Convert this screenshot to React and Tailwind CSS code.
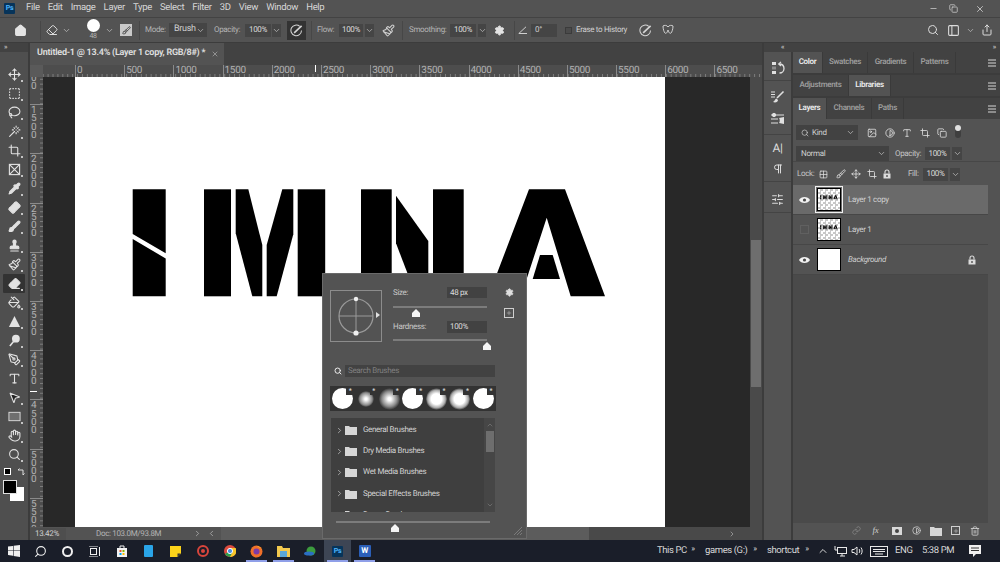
import {
  Move, SquareDashed, Lasso, Wand, Crop, Pipette, Bandage, Brush, Stamp, Eraser, PaintBucket,
  Search, PenTool, Type, MousePointer2, Hand, House, ChevronDown, ChevronRight, ChevronLeft, ChevronUp,
  Settings, Link, Trash2, Minus, X, Copy, Share, SlidersHorizontal, Pilcrow, PanelLeft,
  Image, Contrast, Grid2x2, Paintbrush, Plus
} from "lucide-react"

const menus = ["File", "Edit", "Image", "Layer", "Type", "Select", "Filter", "3D", "View", "Window", "Help"]

const tools = [
  [Move], [SquareDashed], [Lasso], [Wand], [Crop], [FrameTool],
  [Pipette, "currentColor"], [Bandage, "currentColor", "-rotate-45"], [Brush, "currentColor"], [Stamp, "currentColor"], [Paintbrush], [Eraser, "currentColor"],
  [PaintBucket], [GradientTool], [DodgeTool], [PenTool], [Type],
  [MousePointer2, "#222222"], [ShapeTool], [Hand], [Search]
]

const rulerLabels = [0, 500, 1000, 1500, 2000, 2500, 3000, 3500, 4000, 4500, 5000, 5500, 6000, 6500]
const sideLabels = ["1000", "1500", "2000", "2500", "3000", "3500", "4000", "4500", "5000", "5500"]
const brushSets = ["General Brushes", "Dry Media Brushes", "Wet Media Brushes", "Special Effects Brushes", "Bonus Brushes"]

function FrameTool({ size }) {
  return (
    <svg width={size} height={size} viewBox="0 0 14 14" fill="none" stroke="currentColor" strokeWidth="1.2">
      <rect x="1.5" y="1.5" width="11" height="11" />
      <path d="M1.5 1.5l11 11M12.5 1.5l-11 11" />
    </svg>
  )
}

function GradientTool({ size }) {
  return (
    <svg width={size} height={size} viewBox="0 0 14 14">
      <path d="M7 1l6 12H1z" fill="#e4e4e4" />
    </svg>
  )
}

function DodgeTool({ size }) {
  return (
    <svg width={size} height={size} viewBox="0 0 14 14">
      <circle cx="8.5" cy="5" r="4.2" fill="#e4e4e4" />
      <path d="M6 8l-4 5" stroke="#e4e4e4" strokeWidth="1.6" />
    </svg>
  )
}

function ShapeTool({ size }) {
  return (
    <svg width={size} height={size} viewBox="0 0 14 14">
      <rect x="1" y="2.5" width="12" height="9" fill="#6f6f6f" stroke="#dcdcdc" />
    </svg>
  )
}

function FolderIcon() {
  return (
    <svg width="12" height="10" viewBox="0 0 12 10" className="shrink-0">
      <path d="M0 1h4l1 1h7v8H0z" fill="#d6d6d6" />
    </svg>
  )
}

function EyeIcon() {
  return (
    <svg width="11" height="8" viewBox="0 0 11 8">
      <path d="M0 4c2-4 9-4 11 0-2 4-9 4-11 0z" fill="#f2f2f2" />
      <circle cx="5.5" cy="4" r="1.6" fill="#4a4a4a" />
    </svg>
  )
}

function LockIcon({ className = "" }) {
  return (
    <svg width="8" height="10" viewBox="0 0 8 10" className={className}>
      <path d="M2 4.5V3a2 2 0 0 1 4 0v1.5" fill="none" stroke="#dcdcdc" strokeWidth="1.1" />
      <rect x=".5" y="4.5" width="7" height="5" fill="#dcdcdc" />
      <rect x="3.3" y="6" width="1.4" height="2" fill="#535353" />
    </svg>
  )
}

function Art() {
  return (
    <>
      <path d="M132.7 189.3h33v64l-33-19.3zM132.7 239l33 19.5v37.8h-33z" fill="#000" />
      <rect x="204" y="189.3" width="27" height="107" fill="#000" />
      <path d="M235.7 189.3h12.6l14 55.7v51.3h-10l-16.6-63z" fill="#000" />
      <path d="M282.3 189.3h11v45l-16.6 62h-10V245z" fill="#000" />
      <rect x="297.7" y="189.3" width="27.5" height="107" fill="#000" />
      <rect x="361" y="189.3" width="30.7" height="107" fill="#000" />
      <path d="M396 195.7l32.3 45.3v55.3h-12L396 243.3z" fill="#000" />
      <rect x="433" y="189.3" width="30.7" height="107" fill="#000" />
      <path d="M529 189.3h36l40 107h-34.3l-24-78.6-25.7 78.6h-32.7z" fill="#000" />
      <path d="M540 255h12.7l7.3 24h-27.3z" fill="#000" />
    </>
  )
}

function Chevron({ className = "" }) {
  return <ChevronDown size={9} className={"text-[#bdbdbd] shrink-0 " + className} />
}

function ValueBox({ value, boxClass, chevClass, gap = "gap-[1px]" }) {
  return (
    <div className={"flex items-center " + gap}>
      <div className={"h-[13px] bg-[#454545] text-[#dcdcdc] text-[8px] flex items-center justify-center " + boxClass}>{value}</div>
      <div className={"h-[13px] bg-[#454545] flex items-center justify-center " + chevClass}><Chevron /></div>
    </div>
  )
}

function Sep({ className = "" }) {
  return <div className={"w-px h-[19px] bg-[#474747] " + className} />
}

function MenuBar() {
  return (
    <div className="h-[18px] flex items-center bg-[#535353] border-b border-[#434343] shrink-0">
      <div className="ml-[4px] w-[11px] h-[11px] rounded-[1px] bg-[#07345a] text-[#4cb4ff] text-[7px] font-bold leading-[11px] text-center">Ps</div>
      <div className="ml-[11px] flex gap-[8.15px] text-[9.5px] text-[#d6d6d6]">
        {menus.map((m) => <span key={m}>{m}</span>)}
      </div>
      <div className="ml-auto flex items-center text-[#cfcfcf]">
        <div className="w-[20px] flex justify-center"><Minus size={9} /></div>
        <div className="w-[20px] flex justify-center"><Copy size={9} /></div>
        <div className="w-[34px] mr-[3px] flex justify-center"><X size={10} /></div>
      </div>
    </div>
  )
}

function OptionsBar() {
  return (
    <div className="h-[25px] flex items-center bg-[#535353] border-b border-[#3c3c3c] shrink-0 text-[8px] text-[#b4b4b4]">
      <House size={13} fill="#e4e4e4" className="ml-[14px] text-[#e4e4e4]" />
      <Sep className="ml-[13px]" />
      <Eraser size={12} className="ml-[5px] text-[#dedede]" />
      <Chevron className="ml-[4px]" />
      <div className="ml-[15px] flex flex-col items-center w-[14px] -mt-[1px]">
        <div className="w-[13px] h-[13px] rounded-full bg-white" />
        <span className="text-[7px] leading-[8px] text-[#b5b5b5]">48</span>
      </div>
      <Chevron className="ml-[5px]" />
      <div className="ml-[6px] w-[12px] h-[12px] bg-[#c9c9c9] flex items-center justify-center">
        <Brush size={9} className="text-[#333]" />
      </div>
      <Sep className="ml-[7px]" />
      <span className="ml-[5px] w-[23px]">Mode:</span>
      <div className="ml-[1px] w-[38px] h-[14px] bg-[#454545] flex items-center justify-between px-[5px] text-[#cfcfcf] text-[9px]">Brush<Chevron /></div>
      <span className="ml-[7px] w-[31px]">Opacity:</span>
      <ValueBox value="100%" boxClass="w-[26px]" chevClass="w-[9px]" />
      <div className="ml-[6px] w-[19px] h-[19px] bg-[#333] flex items-center justify-center">
        <PressureIcon />
      </div>
      <Sep className="ml-[5px]" />
      <span className="ml-[5px] w-[22px]">Flow:</span>
      <ValueBox value="100%" boxClass="w-[24px]" chevClass="w-[9px]" gap="gap-[2px]" />
      <Paintbrush size={13} className="ml-[8px] text-[#d0d0d0]" />
      <Sep className="ml-[7px]" />
      <span className="ml-[6px] w-[41px]">Smoothing:</span>
      <ValueBox value="100%" boxClass="w-[26px]" chevClass="w-[8px]" gap="gap-[2px]" />
      <Settings size={11} fill="#e4e4e4" className="ml-[8px] text-[#e4e4e4]" />
      <Sep className="ml-[9px]" />
      <svg width="10" height="8" viewBox="0 0 10 8" fill="none" stroke="#cfcfcf" className="ml-[3px]"><path d="M9 7.5H.8L8 .8" /></svg>
      <div className="ml-[3px] w-[26px] h-[13px] bg-[#454545] flex items-center pl-[4px] text-[#cfcfcf]">0°</div>
      <div className="ml-[8px] w-[7px] h-[7px] border border-[#3b3b3b] bg-[#4b4b4b]" />
      <span className="ml-[4px] w-[51px] text-[#d0d0d0] whitespace-nowrap">Erase to History</span>
      <div className="ml-[12px]"><PressureIcon /></div>
      <svg width="12" height="12" viewBox="0 0 12 12" fill="none" stroke="#d0d0d0" className="ml-[10px]"><path d="M6 3C5 1 2 1 1 2c0 3 1 6 2 7s2 0 3-3c1 3 2 4 3 3s2-4 2-7c-1-1-4-1-5 1z" /></svg>
      <div className="ml-auto flex items-center text-[#dcdcdc]">
        <Search size={12} />
        <PanelLeft size={13} className="ml-[8px]" />
        <Chevron className="ml-[6px]" />
        <Share size={12} className="ml-[6px] mr-[7px]" />
      </div>
    </div>
  )
}

function PressureIcon() {
  return (
    <svg width="13" height="13" viewBox="0 0 14 14" fill="none" stroke="#d6d6d6" strokeWidth="1.1">
      <path d="M10.5 2.6A5.7 5.7 0 1 0 12.4 7" />
      <path d="M4.5 9.5L12.5 2" strokeWidth="1.8" />
    </svg>
  )
}

function Toolbar() {
  return (
    <div className="w-[30px] shrink-0 bg-[#4f4f4f] border-r-2 border-[#3c3c3c] flex flex-col">
      <div className="h-[9px] mb-[12.5px] pl-[4px] text-[7px] leading-[8px] text-[#c8c8c8] bg-[#424242] font-bold">»</div>
      <div className="flex flex-col">
        {tools.map(([Icon, fill, extra], i) => (
          <div key={i} className={"relative h-[19px] mx-[3px] flex items-center justify-center text-[#e2e2e2] " + (i === 11 ? "bg-[#333333] rounded-[1px]" : "")}>
            <Icon size={13} fill={fill || "none"} className={extra} />
            {i !== 16 && <div className="absolute right-[2px] bottom-[2px] w-[2px] h-[2px] bg-[#c4c4c4]" />}
          </div>
        ))}
      </div>
      <div className="mt-[4px] pl-[4px] flex gap-[6px] items-center">
        <div className="w-[7px] h-[7px] bg-black border border-white" />
        <svg width="8" height="8" viewBox="0 0 8 8" fill="none" stroke="#e0e0e0"><path d="M1 2h5v5M1 2l1.5-1.5M6 7l1.5-1.5" /></svg>
      </div>
      <div className="mt-[4px] ml-[3px] w-[21px] h-[21px] flex flex-col">
        <div className="w-[14px] h-[14px] bg-black border border-[#e0e0e0] z-10" />
        <div className="self-end -mt-[7px] w-[14px] h-[14px] bg-white" />
      </div>
    </div>
  )
}

function HRuler() {
  return (
    <div className="h-[12px] shrink-0 flex bg-[#4d4d4d] overflow-hidden">
      <div className="w-[13px] bg-[#5a5a5a] shrink-0" />
      <div className="flex-1 flex pl-[32px] bg-[linear-gradient(90deg,#7d7d7d_1px,transparent_1px)] bg-size-[4.92px_3px] bg-bottom bg-repeat-x">
        {rulerLabels.map((n) => (
          <div key={n} className="w-[49.2px] shrink-0 border-l border-[#8a8a8a] pl-[1px] text-[10px] leading-[12px] text-[#b2b2b2]">{n}</div>
        ))}
      </div>
    </div>
  )
}

function VRuler() {
  return (
    <div className="w-[13px] shrink-0 bg-[#4d4d4d] overflow-hidden bg-[linear-gradient(180deg,#7d7d7d_1px,transparent_1px)] bg-size-[3px_4.92px] bg-right bg-repeat-y">
      <div className="-mt-[22px] flex flex-col">
        {sideLabels.map((n) => (
          <div key={n} className="h-[49.2px] shrink-0 border-t border-[#8a8a8a] pl-[1px] pt-[2px]">
            <div className="w-[7px] break-all text-[10px] leading-[8.3px] text-[#b2b2b2]">{n}</div>
          </div>
        ))}
      </div>
    </div>
  )
}

function Document() {
  return (
    <div className="w-[732px] shrink-0 flex flex-col relative">
      <div className="h-[22px] shrink-0 bg-[#424242] flex">
        <div className="w-[194px] bg-[#535353] flex items-center pl-[7px] text-[9px] tracking-[-0.23px] font-semibold text-[#e0e0e0] whitespace-nowrap">
          Untitled-1 @ 13.4% (Layer 1 copy, RGB/8#) *
          <X size={8} className="ml-[6px] text-[#b0b0b0]" />
        </div>
      </div>
      <HRuler />
      <div className="h-[450px] flex">
        <VRuler />
        <div className="flex-1 bg-[#282828] pl-[32px]">
          <div className="w-[590px] h-full bg-white">
            <svg width="590" height="450" viewBox="75 77 590 450"><Art /></svg>
          </div>
        </div>
        <div className="w-[12px] shrink-0 bg-[#4a4a4a] pt-[163px] px-px">
          <div className="h-[147px] bg-[#6e6e6e]" />
        </div>
      </div>
      <div className="h-[13px] shrink-0 flex items-center bg-[#535353] text-[8px] text-[#b4b4b4]">
        <div className="w-[36px] pl-[5px] text-[#cfcfcf] bg-[#4e4e4e] whitespace-nowrap">13.42%</div>
        <span className="ml-[30px] w-[97px] whitespace-nowrap">Doc: 103.0M/93.8M</span>
        <ChevronRight size={9} />
        <ChevronLeft size={9} className="ml-[5px]" />
        <div className="ml-[5px] w-[368px] h-full bg-[#5c5c5c]" />
        <div className="flex-1 h-full bg-[#494949] flex items-center justify-end pr-[14px]"><ChevronRight size={8} /></div>
        <div className="w-[12px] h-full bg-[#4a4a4a]" />
      </div>
      {/* ruler cursor marks */}
      <div className="absolute left-[285px] top-[22px] w-px h-[7px] bg-white" />
      <div className="absolute left-0 top-[348px] w-[7px] h-px bg-white" />
    </div>
  )
}

function PanelTabs({ tabs, active }) {
  return (
    <div className="flex items-stretch h-[21px] bg-[#424242] text-[8px] font-semibold">
      {tabs.map(([t, w]) => (
        <div key={t} className={"flex items-center justify-center pb-px border-r border-[#3a3a3a] " + w + (t === active ? " bg-[#535353] text-[#ececec]" : " text-[#9c9c9c]")}>{t}</div>
      ))}
      <div className="ml-auto mr-[4px] flex flex-col justify-center gap-px">
        <div className="w-[8px] h-[2px] bg-[#8c8c8c]" />
        <div className="w-[8px] h-[2px] bg-[#8c8c8c]" />
        <div className="w-[8px] h-[2px] bg-[#8c8c8c]" />
      </div>
    </div>
  )
}

function LayerRow({ name, active, italic, visible, thumb, locked }) {
  return (
    <div className={"h-[30px] flex items-center border-b border-[#474747] " + (active ? "bg-[#6a6a6a]" : "bg-[#535353]")}>
      <div className="w-[22px] flex justify-center">
        {visible ? <EyeIcon /> : <div className="w-[9px] h-[9px] border border-[#606060]" />}
      </div>
      <div className={"ml-[2px] w-[24px] h-[23px] border border-black shrink-0 " + (active ? "outline outline-offset-1 outline-[#f0f0f0] " : "") + (thumb ? "bg-[repeating-conic-gradient(#c8c8c8_0_25%,#ffffff_0_50%)] bg-size-[5px_5px]" : "bg-white")}>
        {thumb && <svg width="22" height="21" viewBox="75 77 590 450"><Art /></svg>}
      </div>
      <span className={"ml-[7px] pt-px text-[8px] text-[#d0d0d0] " + (italic ? "italic" : "")}>{name}</span>
      {locked && <LockIcon className="ml-auto mr-[12px]" />}
    </div>
  )
}

function DockIconHistory() {
  return (
    <svg width="14" height="14" viewBox="0 0 14 14" fill="none" stroke="#e0e0e0">
      <rect x="1" y="1" width="4" height="3" fill="#e0e0e0" stroke="none" />
      <rect x="1" y="5.5" width="4" height="3" fill="#8a8a8a" stroke="none" />
      <rect x="1" y="10" width="4" height="3" fill="#e0e0e0" stroke="none" />
      <path d="M8 3c3.5 0 5 2 5 4.5S11 12 8.5 12" strokeWidth="1.3" />
      <path d="M10 .8L7.6 3l2.4 2" strokeWidth="1.1" />
    </svg>
  )
}

function DockIconBrushList() {
  return (
    <svg width="15" height="14" viewBox="0 0 15 14" fill="none" stroke="#e0e0e0">
      <path d="M1 2h4M1 4.5h4M1 7h4" />
      <path d="M13.5 1.5L7 8" strokeWidth="1.6" />
      <path d="M6.5 8.5c-1.5.5-1.5 2.5-3.5 3.5 2.5 1 5 0 5-2z" fill="#e0e0e0" stroke="none" />
    </svg>
  )
}

function DockIconSliderBrush() {
  return (
    <svg width="15" height="14" viewBox="0 0 15 14" fill="none" stroke="#e0e0e0">
      <path d="M1 3h13M1 7h7M1 11h7" />
      <circle cx="4" cy="3" r="1.7" fill="#e0e0e0" />
      <path d="M9 6l5-1v7l-5-1c1-1 1-4 0-5z" fill="#e0e0e0" stroke="none" />
    </svg>
  )
}

function Dock() {
  return (
    <div className="flex-1 flex flex-col bg-[#535353] border-l-2 border-[#3c3c3c]">
      <div className="h-[9px] shrink-0 bg-[#424242] flex justify-between pl-[17px] pr-[4px] text-[7px] leading-[8px] text-[#c8c8c8] font-bold">
        <span>«</span><span>»</span>
      </div>
      <div className="flex-1 flex">
        <div className="w-[29px] shrink-0 border-r-2 border-[#3c3c3c] text-[#dcdcdc]">
          <div className="h-[29px] pt-[3px] border-b border-[#444] flex items-center justify-center"><DockIconHistory /></div>
          <div className="h-[54px] border-b border-[#444] flex flex-col items-center justify-center gap-[8px]">
            <DockIconBrushList />
            <DockIconSliderBrush />
          </div>
          <div className="h-[47px] border-b border-[#444] flex flex-col items-center justify-center gap-[8px]">
            <span className="text-[12px] leading-[14px]">A|</span>
            <Pilcrow size={12} />
          </div>
          <div className="h-[31px] pt-[4px] border-b border-[#444] flex items-center justify-center"><SlidersHorizontal size={13} /></div>
        </div>
        <div className="flex-1 flex flex-col gap-[2px] bg-[#3c3c3c]">
          <PanelTabs active="Color" tabs={[["Color", "w-[30px]"], ["Swatches", "w-[45px]"], ["Gradients", "w-[46px]"], ["Patterns", "w-[42px]"]]} />
          <PanelTabs active="Libraries" tabs={[["Adjustments", "w-[56px]"], ["Libraries", "w-[42px]"]]} />
          <div className="flex-1 flex flex-col bg-[#535353]">
            <PanelTabs active="Layers" tabs={[["Layers", "w-[34px]"], ["Channels", "w-[45px]"], ["Paths", "w-[32px]"]]} />
            <div className="h-[27px] flex items-center pl-[3px] text-[#dcdcdc] shrink-0">
              <div className="w-[62px] h-[15px] bg-[#424242] flex items-center pl-[5px] text-[8px] text-[#d0d0d0]">
                <Search size={8} className="mr-[3px]" />Kind<Chevron className="ml-auto mr-[3px]" />
              </div>
              <Image size={10} className="ml-[9px]" />
              <Contrast size={10} className="ml-[8px]" />
              <Type size={10} className="ml-[7px]" />
              <Crop size={10} className="ml-[8px]" />
              <Copy size={10} className="ml-[7px]" />
              <div className="ml-[8px] w-[6px] h-[13px] rounded-full bg-[#3f3f3f] flex flex-col -mt-[3px]"><div className="w-[6px] h-[6px] rounded-full bg-[#e0e0e0]" /></div>
            </div>
            <div className="h-[15px] flex items-center pl-[3px] shrink-0 text-[8px] text-[#c4c4c4]">
              <div className="w-[93px] h-[15px] bg-[#424242] flex items-center pl-[5px] text-[#d0d0d0]">Normal<Chevron className="ml-auto mr-[3px]" /></div>
              <span className="ml-[6px] w-[30px]">Opacity:</span>
              <ValueBox value="100%" boxClass="w-[25px]" chevClass="w-[10px]" gap="gap-[2px]" />
            </div>
            <div className="h-[23px] pt-[2px] flex items-center pl-[4px] shrink-0 border-t border-[#474747] text-[8px] text-[#c4c4c4]">
              <span className="w-[22px]">Lock:</span>
              <Grid2x2 size={9} className="text-[#e0e0e0]" />
              <Brush size={10} className="ml-[8px] text-[#e0e0e0]" />
              <Move size={10} className="ml-[5px] text-[#e0e0e0]" />
              <Crop size={10} className="ml-[6px] text-[#e0e0e0]" />
              <LockIcon className="ml-[6px]" />
              <span className="ml-[17px] w-[15px]">Fill:</span>
              <ValueBox value="100%" boxClass="w-[25px]" chevClass="w-[10px]" gap="gap-[2px]" />
            </div>
            <div className="flex-1 flex bg-[#4a4a4a] mt-[1px]">
              <div className="w-[195px] shrink-0 flex flex-col">
                <LayerRow name="Layer 1 copy" active visible thumb />
                <LayerRow name="Layer 1" thumb />
                <LayerRow name="Background" italic visible locked />
              </div>
              <div className="flex-1 bg-[#535353]" />
            </div>
            <div className="h-[17px] pb-[2px] shrink-0 flex items-center bg-[#535353] text-[#d0d0d0] pl-[58.5px]">
              <Link size={9} className="text-[#8a8a8a]" />
              <span className="ml-[12px] w-[9px] text-[9px] italic font-['Liberation_Serif',serif]">fx</span>
              <div className="ml-[10px] w-[10px] h-[8px] bg-[#d8d8d8] flex items-center justify-center"><div className="w-[4px] h-[4px] rounded-full bg-[#444]" /></div>
              <Contrast size={9} className="ml-[10.5px]" />
              <div className="ml-[8.5px]"><FolderIcon /></div>
              <div className="ml-[9.5px] w-[9px] h-[9px] border border-[#d0d0d0] flex items-center justify-center"><Plus size={6} /></div>
              <Trash2 size={10} className="ml-[9.5px]" />
            </div>
          </div>
        </div>
      </div>
    </div>
  )
}

function TaskIcon({ children, className = "", underline }) {
  return (
    <div className={"w-[27px] h-[22px] flex items-center justify-center relative " + className}>
      {children}
      {underline && <div className="absolute left-[3px] right-[3px] bottom-0 h-[2px] bg-[#8f9fe8]" />}
    </div>
  )
}

function Taskbar() {
  return (
    <div className="h-[22px] shrink-0 bg-[#1a1e29] flex items-center text-[#d8d8d8] text-[9.5px] tracking-[-0.4px]">
      <TaskIcon>
        <svg width="12" height="12" viewBox="0 0 12 12" fill="#f0f0f0"><path d="M0 1.6l5-.7v4.6H0zM5.6.8L12 0v5.5H5.6zM0 6.1h5v4.7l-5-.7zM5.6 6.1H12V12l-6.4-.9z" /></svg>
      </TaskIcon>
      <TaskIcon><Search size={13} className="-scale-x-100 text-[#f0f0f0]" /></TaskIcon>
      <TaskIcon><div className="w-[11px] h-[11px] rounded-full border-2 border-[#f0f0f0]" /></TaskIcon>
      <TaskIcon>
        <svg width="13" height="11" viewBox="0 0 13 11" fill="none" stroke="#f0f0f0"><rect x="2.5" y="2.5" width="6" height="6" /><path d="M1 0h9M1 11h9M11.5 1v9" /></svg>
      </TaskIcon>
      <TaskIcon>
        <svg width="12" height="12" viewBox="0 0 12 12"><path d="M1 3h10v9H1z" fill="#f2f2f2" /><path d="M4 3V1h4v2" fill="none" stroke="#f2f2f2" /><rect x="3.5" y="5" width="2" height="2" fill="#e8562a" /><rect x="6.5" y="5" width="2" height="2" fill="#7fba00" /><rect x="3.5" y="8" width="2" height="2" fill="#00a4ef" /><rect x="6.5" y="8" width="2" height="2" fill="#ffb900" /></svg>
      </TaskIcon>
      <TaskIcon><div className="w-[9px] h-[12px] rounded-[1px] bg-[#2aa5e8]" /></TaskIcon>
      <TaskIcon>
        <svg width="11" height="11" viewBox="0 0 11 11"><path d="M0 0h11v7.5L7.5 11H0z" fill="#fbd31a" /><path d="M7.5 11V7.5H11z" fill="#333" /></svg>
      </TaskIcon>
      <TaskIcon><div className="w-[12px] h-[12px] rounded-full border-2 border-[#d8453c] flex items-center justify-center"><div className="w-[4px] h-[4px] rounded-full bg-[#d8453c]" /></div></TaskIcon>
      <TaskIcon>
        <svg width="12" height="12" viewBox="0 0 12 12"><circle cx="6" cy="6" r="6" fill="#dd4b3e" /><path d="M6 6L1 9a6 6 0 0 0 5 3l3-5z" fill="#2ba24c" /><path d="M6 3h5.6A6 6 0 0 1 6 12l3-6z" fill="#f7c52b" /><circle cx="6" cy="6" r="2.6" fill="#4a90e2" stroke="#fff" /></svg>
      </TaskIcon>
      <TaskIcon underline>
        <svg width="13" height="13" viewBox="0 0 13 13"><circle cx="6.5" cy="6.5" r="6" fill="#f0702a" /><path d="M6.5 1A5.5 5.5 0 0 1 12 6.5c0-1-.6-2.6-1.6-3.6z" fill="#ffcb2b" /><circle cx="6.5" cy="6.5" r="3" fill="#7c3aa8" /></svg>
      </TaskIcon>
      <TaskIcon underline>
        <svg width="13" height="11" viewBox="0 0 13 11"><path d="M0 0h5l1 2h7v9H0z" fill="#f3c94e" /><rect x="3" y="5" width="7" height="6" fill="#5aa7d8" /></svg>
      </TaskIcon>
      <TaskIcon>
        <svg width="13" height="11" viewBox="0 0 13 11"><ellipse cx="7" cy="5" rx="4.5" ry="4.5" fill="#3c9c3e" /><ellipse cx="5" cy="7.5" rx="5" ry="2" fill="#2b6fc4" /></svg>
      </TaskIcon>
      <TaskIcon underline className="bg-[#3d4554]">
        <div className="w-[11px] h-[11px] rounded-[1px] bg-[#07345a] text-[#4cb4ff] text-[7px] font-bold leading-[11px] text-center">Ps</div>
      </TaskIcon>
      <TaskIcon underline>
        <div className="w-[12px] h-[12px] rounded-[1px] bg-[#2b5fb8] text-white text-[8px] font-bold leading-[12px] text-center">W</div>
      </TaskIcon>
      <div className="ml-auto flex items-center whitespace-nowrap">
        <span className="w-[28px]">This PC</span>
        <span className="ml-[4px] w-[8px] -mt-[4px] text-[8px] text-center">»</span>
        <span className="ml-[8px] w-[42px]">games (G:)</span>
        <span className="ml-[4px] w-[8px] -mt-[4px] text-[8px] text-center">»</span>
        <span className="ml-[8px] w-[32px]">shortcut</span>
        <span className="ml-[4px] w-[8px] -mt-[4px] text-[8px] text-center">»</span>
        <ChevronUp size={12} className="ml-[6px]" />
        <svg width="13" height="11" viewBox="0 0 13 11" fill="none" stroke="#e8e8e8" className="ml-[5px]"><rect x="3.5" y="1.5" width="9" height="6" /><path d="M6 10h5M8 8v2M1 0v4h3" /></svg>
        <svg width="12" height="10" viewBox="0 0 12 10" fill="none" stroke="#e8e8e8" className="ml-[4px]"><path d="M1 3.5h2L6 1v8L3 6.5H1zM8 3c1 1 1 3 0 4M10 1.5c1.5 2 1.5 5 0 7" /></svg>
        <svg width="18" height="11" viewBox="0 0 18 11" fill="none" stroke="#e8e8e8" className="ml-[7px]"><rect x=".5" y=".5" width="17" height="10" /><path d="M3 3.5h12M3 5.5h12M5 8h8" /></svg>
        <span className="ml-[7px] w-[17px]">ENG</span>
        <span className="ml-[10px] w-[32px]">5:38 PM</span>
        <svg width="12" height="12" viewBox="0 0 12 12" className="ml-[15px] mr-[19px]"><path d="M0 0h12v9H7l-3 3V9H0z" fill="#f0f0f0" /><path d="M2 3h8M2 5.5h8" stroke="#333" /></svg>
      </div>
    </div>
  )
}

function BrushPopup() {
  const thumbs = ["hard", "soft", "softer", "hard", "mid", "mid", "hard"]
  return (
    <div className="absolute left-[322px] top-[273px] w-[205px] h-[266px] bg-[#535353] border border-[#6a6a6a] text-[8px] text-[#c8c8c8] flex flex-col">
      <div className="h-[70px] flex pl-[7px] pt-[16px]">
        <div className="w-[52px] h-[52px] border border-[#8c8c8c] flex items-center justify-center shrink-0">
          <svg width="40" height="40" viewBox="0 0 40 40" fill="none" stroke="#9a9a9a">
            <circle cx="20" cy="20" r="17" strokeWidth="1.2" />
            <path d="M3 20h34M20 3v34" />
            <circle cx="20" cy="3" r="2.2" fill="#f0f0f0" stroke="none" />
            <circle cx="20" cy="37" r="2.6" fill="#f0f0f0" stroke="none" />
          </svg>
        </div>
        <div className="w-0 h-0 mt-[22px] -ml-[6px] border-y-[3px] border-y-transparent border-l-[4px] border-l-[#e0e0e0] shrink-0" />
        <div className="ml-[13px] w-[94px] flex flex-col">
          <div className="h-[11px] flex items-center justify-between -mt-[3px]">
            <span>Size:</span>
            <div className="w-[40px] h-[11px] bg-[#424242] pl-[3px] text-[#dcdcdc] leading-[11px]">48 px</div>
          </div>
          <div className="mt-[8px] h-[2px] bg-[#7c7c7c]" />
          <div className="ml-[23px] mt-[1px] w-0 h-0"><Slider /></div>
          <div className="mt-[12px] h-[12px] flex items-center justify-between">
            <span>Hardness:</span>
            <div className="w-[40px] h-[12px] bg-[#424242] pl-[3px] text-[#dcdcdc] leading-[12px]">100%</div>
          </div>
          <div className="mt-[6px] h-[2px] bg-[#7c7c7c]" />
          <div className="ml-[94px] mt-[1px] w-0 h-0"><Slider /></div>
        </div>
        <div className="ml-[17px] flex flex-col items-center -mt-[2px]">
          <Settings size={9} fill="#e0e0e0" className="text-[#e0e0e0]" />
          <div className="mt-[11px] w-[10px] h-[10px] border border-[#cfcfcf] flex items-center justify-center"><Plus size={6} /></div>
        </div>
      </div>
      <div className="mt-[20px] h-[13px] flex items-center pl-[11px]">
        <Search size={8} strokeWidth={3} className="text-[#ececec]" />
        <div className="ml-[3px] w-[150px] h-[12px] bg-[#424242] pl-[3px] text-[#808080] leading-[12px]">Search Brushes</div>
      </div>
      <div className="mt-[9px] ml-[7px] w-[166px] h-[25px] bg-[#333333] flex items-center justify-around px-[1px]">
        {thumbs.map((t, i) => (
          <div key={i} className="w-[21px] h-[21px] flex items-center justify-center relative">
            {t === "hard" && <div className="w-[21px] h-[21px] rounded-full bg-white" />}
            {t === "soft" && <div className="w-[16px] h-[16px] rounded-full bg-[radial-gradient(circle,#fff_10%,#8a8a8a_55%,transparent_72%)]" />}
            {t === "softer" && <div className="w-[22px] h-[22px] rounded-full bg-[radial-gradient(circle,#fff_10%,#8a8a8a_50%,transparent_72%)]" />}
            {t === "mid" && <div className="w-[22px] h-[22px] rounded-full bg-[radial-gradient(circle,#fff_35%,#aaa_58%,transparent_72%)]" />}
            <div className="absolute -right-px -top-px w-[8px] h-[8px] bg-[#333333] text-[#e0e0e0] text-[7px] leading-[8px] text-center">*</div>
          </div>
        ))}
      </div>
      <div className="mt-[7px] ml-[8px] w-[164px] h-[94px] bg-[#3f3f3f] flex overflow-hidden">
        <div className="flex-1 pt-[1.5px]">
          {brushSets.map((s) => (
            <div key={s} className="h-[21.2px] flex items-center pl-[4px] text-[#d2d2d2] whitespace-nowrap">
              <ChevronRight size={9} className="text-[#bdbdbd]" />
              <div className="ml-[1px]"><FolderIcon /></div>
              <span className="ml-[6px]">{s}</span>
            </div>
          ))}
        </div>
        <div className="w-[11px] flex flex-col items-center bg-[#464646]">
          <ChevronUp size={8} className="mt-[3px] text-[#7c7c7c]" />
          <div className="mt-[2px] w-[8px] h-[21px] bg-[#6e6e6e]" />
          <ChevronDown size={8} className="mt-auto mb-[3px] text-[#7c7c7c]" />
        </div>
      </div>
      <div className="mt-[9px] ml-[13px] w-[154px] h-[2px] bg-[#7c7c7c]" />
      <div className="ml-[72px] mt-[1px] w-0 h-0"><Slider /></div>
      <svg width="10" height="10" viewBox="0 0 10 10" stroke="#7a7a7a" className="ml-auto mr-[3px] mt-auto mb-[2px]"><path d="M9 1L1 9M9 4L4 9M9 7L7 9" /></svg>
    </div>
  )
}

function Slider() {
  return (
    <svg width="10" height="8" viewBox="0 0 10 8" className="-ml-[5px] overflow-visible">
      <path d="M5 0l4 4v4H1V4z" fill="#f4f4f4" />
    </svg>
  )
}

export default function App() {
  return (
    <div className="relative w-[1000px] h-[562px] overflow-hidden flex flex-col bg-[#535353] font-['Roboto',sans-serif] tracking-[-0.33px] [text-rendering:geometricPrecision]">
      <MenuBar />
      <OptionsBar />
      <div className="flex-1 flex min-h-0">
        <Toolbar />
        <Document />
        <Dock />
      </div>
      <Taskbar />
      <BrushPopup />
    </div>
  )
}
